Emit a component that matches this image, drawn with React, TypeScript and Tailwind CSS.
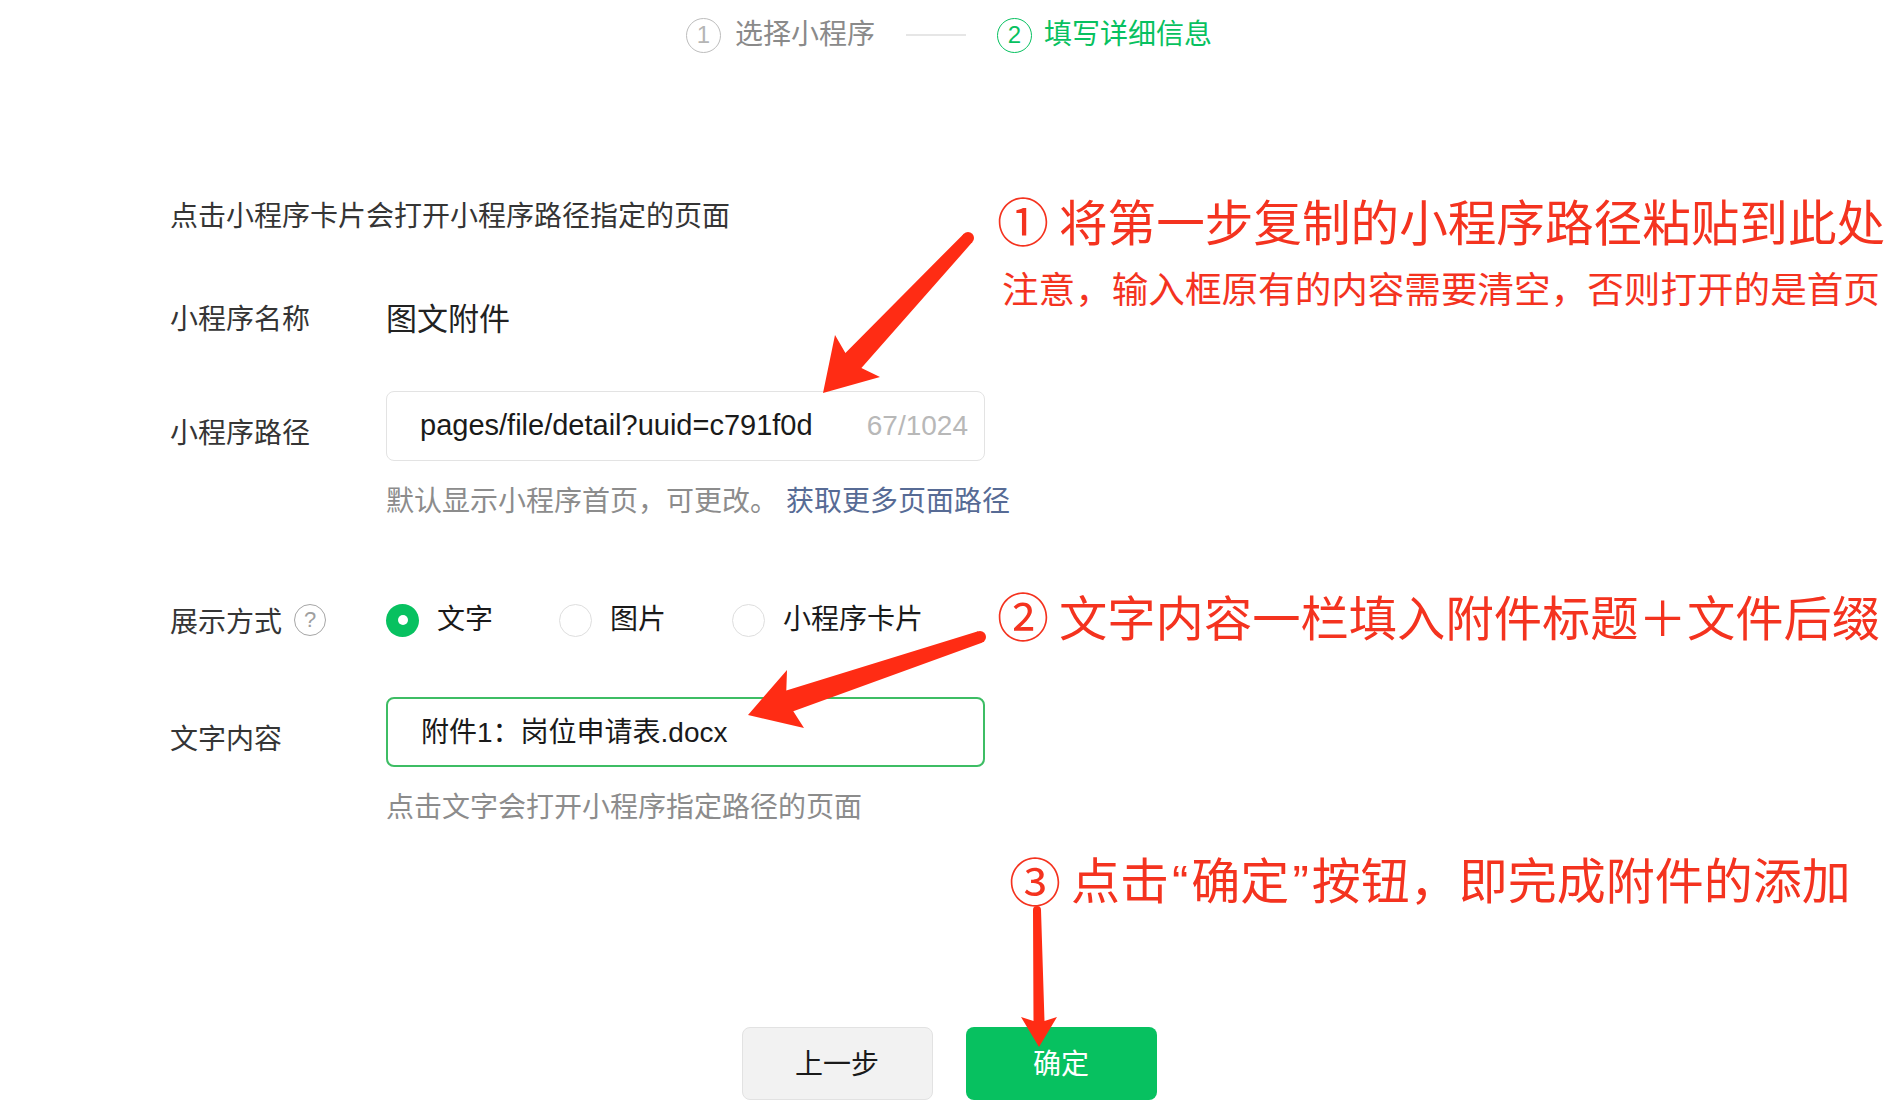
const font = "font-['Liberation_Sans','Noto_Sans_CJK_SC',sans-serif]";

function StepDot({ n, active }: { n: number; active?: boolean }) {
  return (
    <span
      className={
        active
          ? "flex h-[35px] w-[35px] items-center justify-center rounded-full border-[1.5px] border-[#07c160] text-[24px] leading-none text-[#07c160]"
          : "flex h-[35px] w-[35px] items-center justify-center rounded-full border-[1.5px] border-[#bdbdbd] text-[24px] leading-none text-[#b5b5b5]"
      }
    >
      {n}
    </span>
  );
}

function Radio({ label, checked }: { label: string; checked?: boolean }) {
  return (
    <label className="flex items-center gap-[18px]">
      {checked ? (
        <span className="flex h-[33px] w-[33px] items-center justify-center rounded-full bg-[#07c160]">
          <span className="h-[10px] w-[10px] rounded-full bg-white" />
        </span>
      ) : (
        <span className="h-[33px] w-[33px] rounded-full border-[1.5px] border-[#dedede]" />
      )}
      <span className="text-[28px] text-[#1a1a1a]">{label}</span>
    </label>
  );
}

function Arrows() {
  return (
    <svg
      className="pointer-events-none absolute inset-0 h-full w-full"
      viewBox="0 0 1898 1112"
    >
      <g fill="#ff2c14">
        <polygon points="823,393 835,335 845.4,352.9 963.6,233.9 972.4,242.1 861.4,367.9 880,377" />
        <circle cx="968" cy="238" r="6" />
        <polygon points="748,715 787,670 786.3,690.5 978.1,631.3 981.9,642.7 793.3,711.3 804,728" />
        <circle cx="980" cy="637" r="6" />
        <polygon points="1039,1047 1021,1017 1033.5,1021 1033,910 1041,910 1044.5,1021 1057,1017" />
        <circle cx="1037" cy="910" r="4" />
      </g>
    </svg>
  );
}

export default function App() {
  return (
    <div className={`relative h-[1112px] w-full overflow-hidden bg-white ${font}`}>
      {/* steps */}
      <div className="flex h-[70px] items-center justify-center">
        <StepDot n={1} />
        <span className="ml-[14px] text-[28px] text-[#8a8a8a]">选择小程序</span>
        <span className="mx-[31px] h-[2px] w-[60px] bg-[#e6e6e6]" />
        <StepDot n={2} active />
        <span className="ml-[12px] text-[28px] text-[#07c160]">填写详细信息</span>
      </div>

      <div className="flex flex-col pl-[170px]">
        <p className="mt-[127px] h-[40px] text-[28px] leading-[40px] text-[#353535]">
          点击小程序卡片会打开小程序路径指定的页面
        </p>

        <div className="mt-[63px] flex h-[40px] items-center">
          <span className="w-[216px] shrink-0 text-[28px] text-[#353535]">小程序名称</span>
          <span className="text-[31px] text-[#222]">图文附件</span>
        </div>

        <div className="mt-[51px] flex items-center">
          <span className="w-[216px] shrink-0 pt-[16px] text-[28px] text-[#353535]">小程序路径</span>
          <div className="flex h-[70px] w-[599px] items-center justify-between rounded-[8px] border-[1.5px] border-[#e3e3e3] pl-[33px] pr-[16px]">
            <span className="text-[29px] text-[#1a1a1a]">pages/file/detail?uuid=c791f0d</span>
            <span className="text-[28px] text-[#b8b8b8]">67/1024</span>
          </div>
        </div>

        <p className="ml-[216px] mt-[21px] h-[40px] text-[28px] leading-[40px] text-[#8c8c8c]">
          默认显示小程序首页，可更改。
          <span className="ml-[8px] text-[#576b95]">获取更多页面路径</span>
        </p>

        <div className="mt-[78px] flex h-[40px] items-center">
          <div className="flex w-[216px] shrink-0 items-center gap-[12px]">
            <span className="pt-[5px] text-[28px] text-[#353535]">展示方式</span>
            <span className="flex h-[32px] w-[32px] items-center justify-center rounded-full border-[1.5px] border-[#a6a6a6] text-[22px] leading-none text-[#a0a0a0]">
              ?
            </span>
          </div>
          <div className="flex items-center gap-[66px]">
            <Radio label="文字" checked />
            <Radio label="图片" />
            <Radio label="小程序卡片" />
          </div>
        </div>

        <div className="mt-[57px] flex items-center">
          <span className="w-[216px] shrink-0 pt-[16px] text-[28px] text-[#353535]">文字内容</span>
          <div className="flex h-[70px] w-[599px] items-center rounded-[8px] border-2 border-[#3dbd64] pl-[33px]">
            <span className="pt-[2px] text-[28px] text-[#1a1a1a]">附件1：岗位申请表.docx</span>
          </div>
        </div>

        <p className="ml-[216px] mt-[21px] h-[40px] text-[28px] leading-[40px] text-[#8c8c8c]">
          点击文字会打开小程序指定路径的页面
        </p>
      </div>

      <div className="mt-[199px] flex justify-center gap-[33px]">
        <button className="flex h-[73px] w-[191px] items-center justify-center rounded-[8px] border border-[#e2e2e2] bg-[#f2f2f2] pt-[3px] text-[28px] text-[#1a1a1a]">
          上一步
        </button>
        <button className="flex h-[73px] w-[191px] items-center justify-center rounded-[8px] bg-[#07c160] pt-[3px] text-[28px] text-white">
          确定
        </button>
      </div>

      {/* annotations drawn over the screenshot */}
      <Arrows />
      <div className="absolute left-[997px] top-[194px] flex items-center gap-[10px] font-['Noto_Sans_CJK_SC',sans-serif] text-[48.6px] leading-none text-[#f4331f]">
        <span className="text-[52px]">①</span>
        <span>将第一步复制的小程序路径粘贴到此处</span>
      </div>
      <div className="absolute left-[1002px] top-[270px] font-['Noto_Sans_CJK_SC',sans-serif] text-[36.6px] leading-none text-[#f4331f]">
        注意，输入框原有的内容需要清空，否则打开的是首页
      </div>
      <div className="absolute left-[997px] top-[589px] flex items-center gap-[10px] font-['Noto_Sans_CJK_SC',sans-serif] text-[48.3px] leading-none text-[#f4331f]">
        <span className="text-[52px]">②</span>
        <span>文字内容一栏填入附件标题＋文件后缀</span>
      </div>
      <div className="absolute left-[1009px] top-[853px] flex items-center gap-[10px] font-['Noto_Sans_CJK_SC',sans-serif] text-[49px] leading-none text-[#f4331f]">
        <span className="text-[52px]">③</span>
        <span>
          点击<span className="px-[3px] font-['Liberation_Sans',sans-serif]">“</span>确定<span className="px-[3px] font-['Liberation_Sans',sans-serif]">”</span>按钮，即完成附件的添加
        </span>
      </div>
    </div>
  );
}
